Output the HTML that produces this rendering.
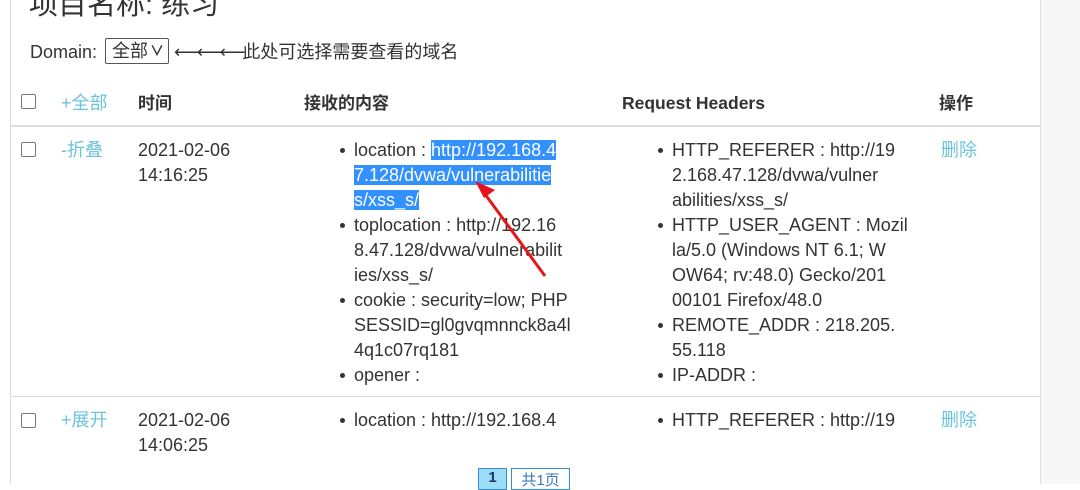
<!DOCTYPE html>
<html><head><meta charset="utf-8"><style>
body{margin:0;width:1080px;height:484px;overflow:hidden;background:#fff;font-family:"Liberation Sans","Noto Sans CJK SC",sans-serif;color:#333;position:relative}
.t{position:absolute;white-space:nowrap;font-size:18px;line-height:25px}
.b{font-weight:bold;font-size:17px}
.l{color:#6cc4dc}
.cb{position:absolute;width:13px;height:13px;border:1px solid #777;border-radius:2px;background:#fff}
.dot{position:absolute;width:5px;height:5px;border-radius:50%;background:#333}
.sel{background:#3390ff;color:#fff}
</style></head><body>
<div style="position:absolute;left:10px;top:0;width:1px;height:484px;background:#ddd"></div>
<div style="position:absolute;left:1040px;top:0;width:40px;height:484px;background:#f7f7f7;border-left:1px solid #ddd"></div>
<div class="t" style="left:29px;top:-13px;font-size:29px;line-height:36px">项目名称: 练习</div>
<div class="t" style="left:30px;top:40px">Domain:</div>
<div style="position:absolute;left:105px;top:38px;height:26px;border:1px solid #555;border-radius:2px;font-size:18px;line-height:25px;padding-left:6px;box-sizing:border-box;width:64px">全部<span style="font-size:14px;font-weight:bold;position:absolute;left:44px;top:0">∨</span></div>
<div class="t" style="left:174px;top:40px"><span style="letter-spacing:-3px">⟵⟵⟵</span>此处可选择需要查看的域名</div>
<div class="cb" style="left:21px;top:94px"></div>
<div class="t l" style="left:61px;top:91px">+全部</div>
<div class="t b" style="left:138px;top:91px">时间</div>
<div class="t b" style="left:304px;top:91px">接收的内容</div>
<div class="t b" style="left:622px;top:91px;font-size:17.5px">Request Headers</div>
<div class="t b" style="left:939px;top:91px">操作</div>
<div style="position:absolute;left:10px;top:125px;width:1030px;height:2px;background:#ddd"></div>
<div class="cb" style="left:21px;top:142px"></div>
<div class="t l" style="left:61px;top:138px">-折叠</div>
<div class="t" style="left:138px;top:138px">2021-02-06<br>14:16:25</div>
<div class="dot" style="left:340px;top:148px"></div>
<div class="dot" style="left:340px;top:223px"></div>
<div class="dot" style="left:340px;top:298px"></div>
<div class="dot" style="left:340px;top:373px"></div>
<div class="t" style="left:354px;top:138px">location : <span class="sel">http://192.168.4</span><br><span class="sel">7.128/dvwa/vulnerabilitie</span><br><span class="sel">s/xss_s/</span><br>toplocation : http://192.16<br>8.47.128/dvwa/vulnerabilit<br>ies/xss_s/<br>cookie : security=low; PHP<br>SESSID=gl0gvqmnnck8a4l<br>4q1c07rq181<br>opener :</div>
<div class="dot" style="left:658px;top:148px"></div>
<div class="dot" style="left:658px;top:223px"></div>
<div class="dot" style="left:658px;top:323px"></div>
<div class="dot" style="left:658px;top:373px"></div>
<div class="t" style="left:672px;top:138px">HTTP_REFERER : http://19<br>2.168.47.128/dvwa/vulner<br>abilities/xss_s/<br>HTTP_USER_AGENT : Mozil<br>la/5.0 (Windows NT 6.1; W<br>OW64; rv:48.0) Gecko/201<br>00101 Firefox/48.0<br>REMOTE_ADDR : 218.205.<br>55.118<br>IP-ADDR :</div>
<div class="t l" style="left:941px;top:138px">删除</div>
<svg style="position:absolute;left:0;top:0" width="1080" height="484"><line x1="545" y1="276" x2="482" y2="190" stroke="#e8141c" stroke-width="3"/><polygon points="475,181 495,190 484,198" fill="#e8141c"/></svg>
<div style="position:absolute;left:10px;top:396px;width:1030px;height:1px;background:#ddd"></div>
<div class="cb" style="left:21px;top:413px"></div>
<div class="t l" style="left:61px;top:408px">+展开</div>
<div class="t" style="left:138px;top:408px">2021-02-06<br>14:06:25</div>
<div class="dot" style="left:340px;top:418px"></div>
<div class="t" style="left:354px;top:408px">location : http://192.168.4</div>
<div class="dot" style="left:658px;top:418px"></div>
<div class="t" style="left:672px;top:408px">HTTP_REFERER : http://19</div>
<div class="t l" style="left:941px;top:408px">删除</div>
<div style="position:absolute;left:478px;top:468px;width:27px;height:20px;background:#9bdcf7;border:1px solid #3390cc;font-size:15px;text-align:center;color:#236;font-weight:bold">1</div>
<div style="position:absolute;left:511px;top:468px;width:57px;height:20px;border:1px solid #3390cc;font-size:15px;text-align:center;color:#3a7ab8">共1页</div>
</body></html>
